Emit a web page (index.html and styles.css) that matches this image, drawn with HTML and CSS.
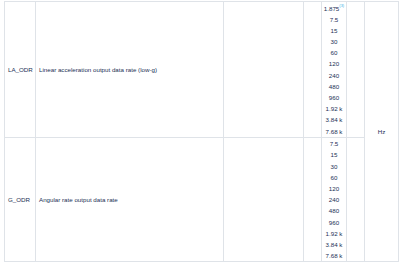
FILE: index.html
```html
<!DOCTYPE html>
<html>
<head>
<meta charset="utf-8">
<link rel="stylesheet" href="styles.css">
</head>
<body>
<table class="regs">
  <colgroup>
    <col class="c-name"><col class="c-desc"><col class="c-empty"><col class="c-min"><col class="c-val"><col class="c-max"><col class="c-unit">
  </colgroup>
  <tr class="r-la">
    <td class="name">LA_ODR</td>
    <td class="desc">Linear acceleration output data rate (low-g)</td>
    <td></td>
    <td></td>
    <td class="vals">
      <div>1.875<sup class="note">(3)</sup></div>
      <div>7.5</div><div>15</div><div>30</div><div>60</div><div>120</div><div>240</div><div>480</div><div>960</div><div>1.92 k</div><div>3.84 k</div><div>7.68 k</div>
    </td>
    <td></td>
    <td class="unit" rowspan="2">Hz</td>
  </tr>
  <tr class="r-g">
    <td class="name">G_ODR</td>
    <td class="desc">Angular rate output data rate</td>
    <td></td>
    <td></td>
    <td class="vals">
      <div>7.5</div><div>15</div><div>30</div><div>60</div><div>120</div><div>240</div><div>480</div><div>960</div><div>1.92 k</div><div>3.84 k</div><div>7.68 k</div>
    </td>
    <td></td>
  </tr>
</table>
</body>
</html>
```
FILE: styles.css
```css
html, body {
  margin: 0;
  padding: 0;
  background: #ffffff;
}
body {
  font-family: "Liberation Sans", Arial, sans-serif;
  font-size: 6.2px;
  color: #1a2f55;
  overflow: hidden;
}
.regs {
  border-collapse: collapse;
  margin: 1px 0 0 4px;
  table-layout: fixed;
  width: 394px;
}
.c-name { width: 31px; }
.c-desc { width: 188px; }
.c-empty { width: 80px; }
.c-min { width: 18px; }
.c-val { width: 25px; }
.c-max { width: 18px; }
.c-unit { width: 34px; }
.regs td {
  border: 1px solid #dfe3e8;
  padding: 0 3px;
  vertical-align: middle;
  white-space: nowrap;
}
.regs td.vals {
  text-align: center;
  padding: 0.5px 0 0;
  vertical-align: top;
}
.vals div {
  line-height: 11.2px;
  height: 11.2px;
}
.regs td.unit {
  text-align: center;
  vertical-align: middle;
}
.note {
  color: #3cb4e6;
  font-size: 4px;
  vertical-align: top;
  line-height: 1;
  position: relative;
  top: 1px;
}
```
